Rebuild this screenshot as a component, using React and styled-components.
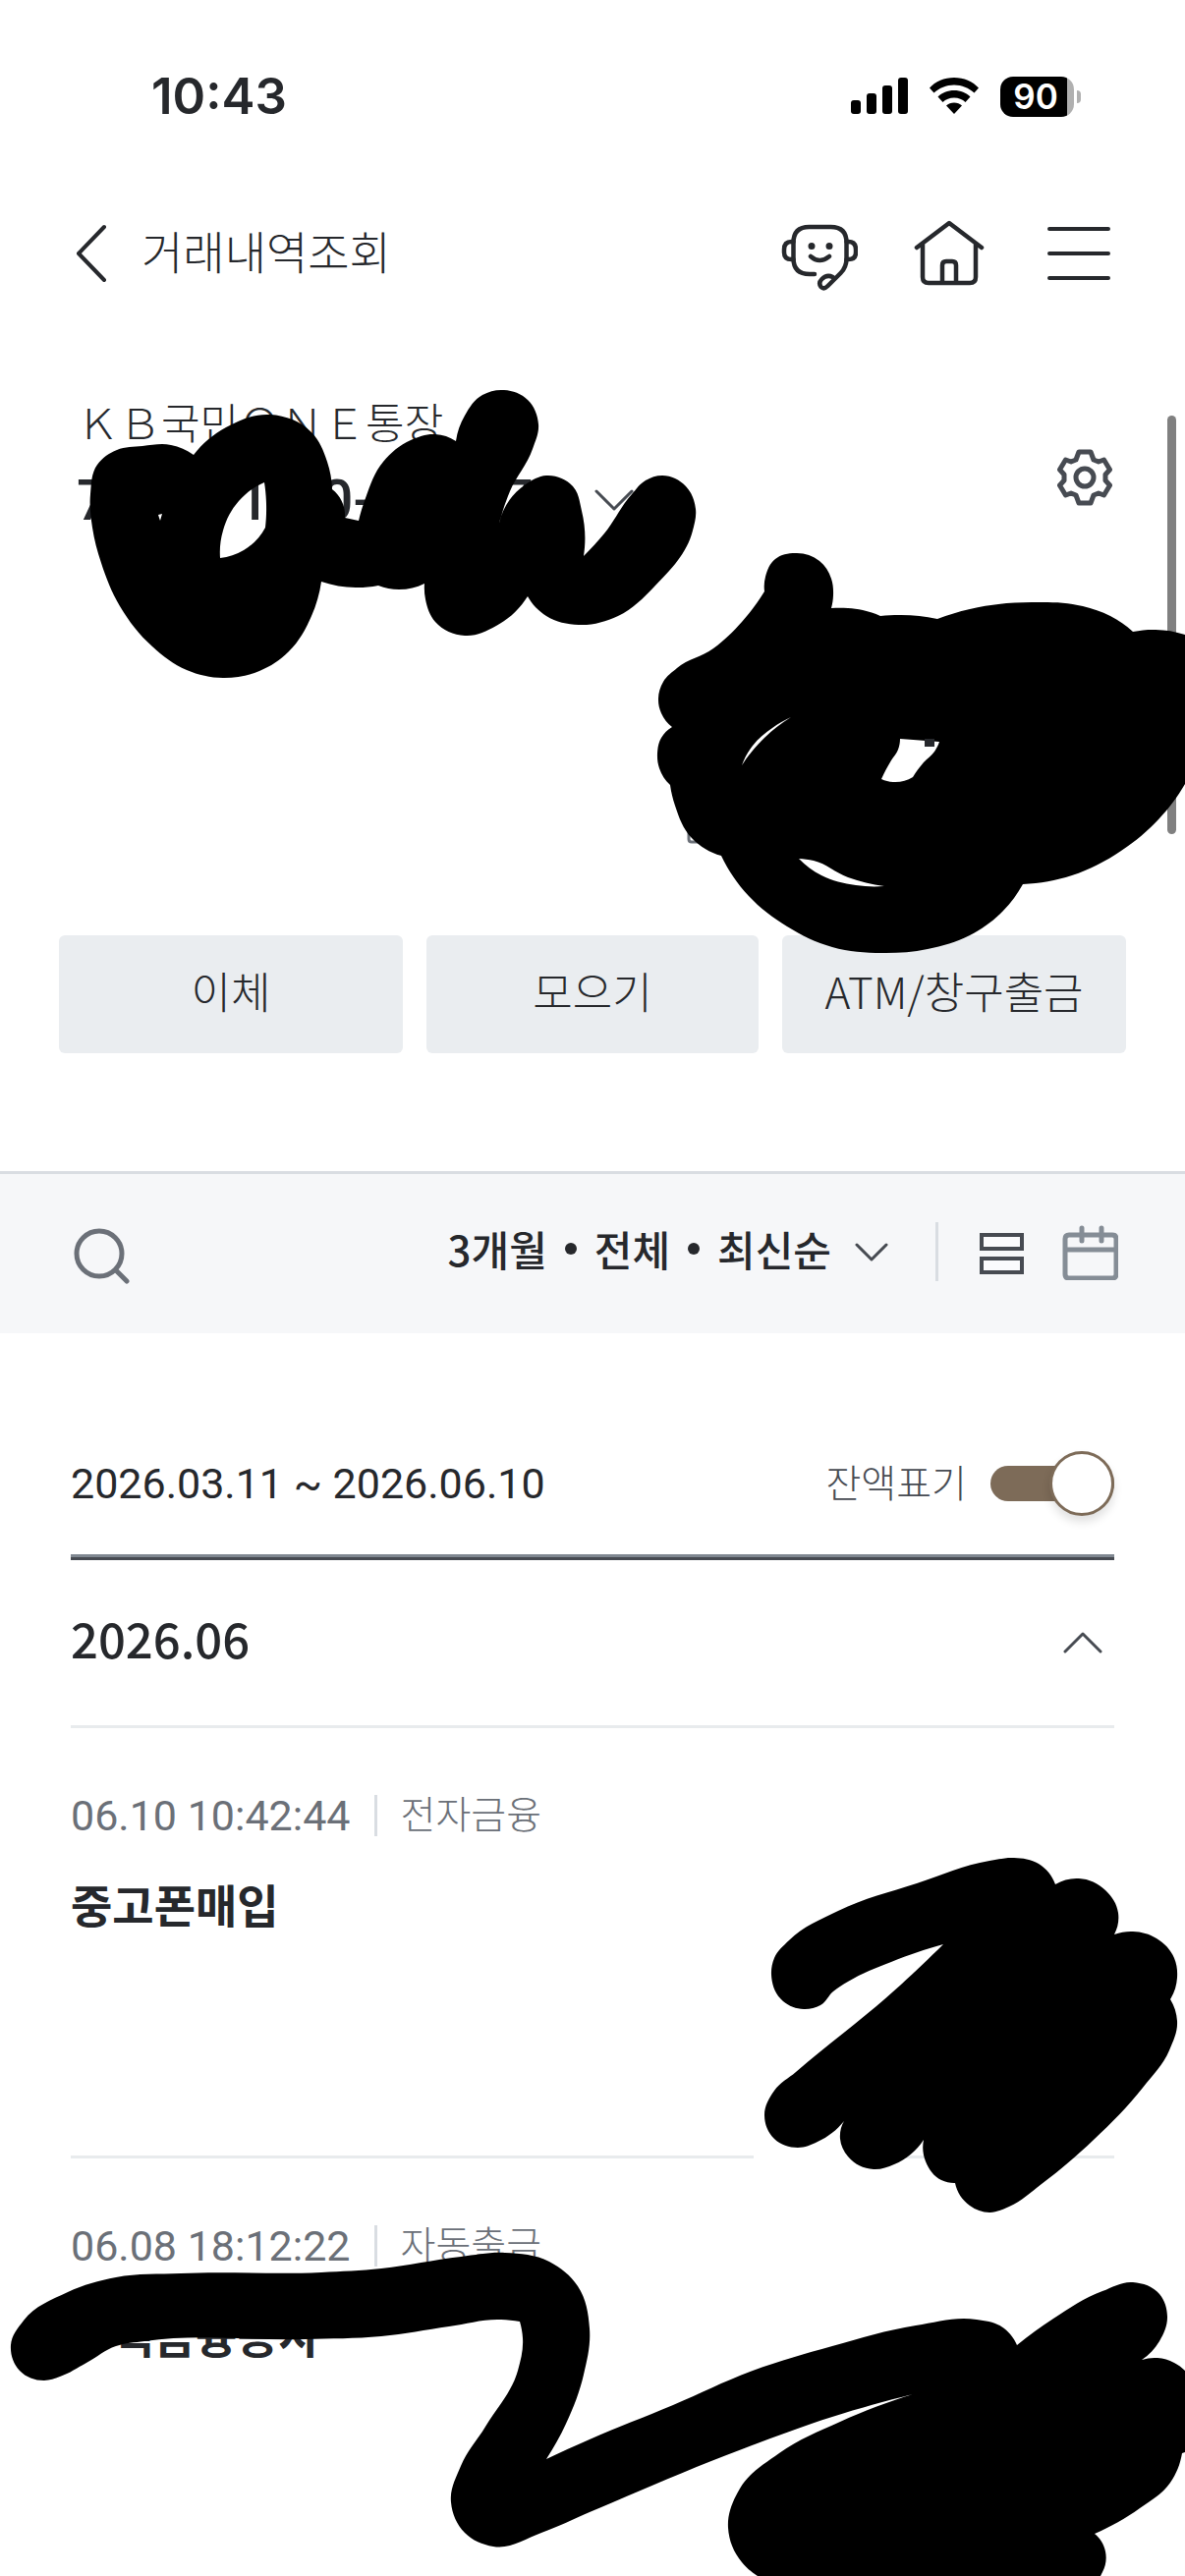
import React, { useState } from 'react';
import styled, { createGlobalStyle } from 'styled-components';

const GlobalStyle = createGlobalStyle`
  :root {
    --color_ink: #26282c;
    --color_ink_soft: #474b52;
    --color_muted: #6b7078;
    --color_line: #d9dde2;
    --color_line_soft: #e8ebed;
    --color_accent: #7d6b58;
  }

  *,
  *::before,
  *::after {
    box-sizing: border-box;
  }

  body {
    margin: 0;
    background: #fff;
    color: var(--color_ink);
    font-family: Roboto, 'Noto Sans CJK KR', sans-serif;
  }

  button {
    margin: 0;
    padding: 0;
    border: 0;
    background: none;
    color: inherit;
    font: inherit;
    cursor: pointer;
  }

  svg {
    display: block;
    flex: none;
  }
`;

const Page = styled.div`
  position: relative;
  height: 100vh;
  min-height: 100vh;
  overflow: hidden;
`;

const StatusBar = styled.div`
  display: flex;
  justify-content: space-between;
  align-items: center;
  height: 194px;
  padding: 2px 106px 0 154px;
`;

const Clock = styled.time`
  font-family: Inter, sans-serif;
  font-size: 51px;
  font-weight: 600;
  line-height: 60px;
`;

const StatusIcons = styled.div`
  display: flex;
  align-items: center;
  gap: 22px;
`;

const Battery = styled.div`
  display: flex;
  align-items: center;
  gap: 3px;

  .level {
    width: 75px;
    padding-right: 3px;
    border-radius: 13px;
    background: linear-gradient(90deg, #000 68px, #b0b0b0 68px);
    color: #fff;
    font-family: Inter, sans-serif;
    font-size: 35px;
    font-weight: 600;
    line-height: 41px;
    text-align: center;
  }

  .tip {
    width: 4px;
    height: 13px;
    border-radius: 0 6px 6px 0;
    background: #b0b0b0;
  }
`;

const Header = styled.header`
  display: flex;
  align-items: center;
  height: 128px;
  padding: 0 69px 0 75px;

  h1 {
    margin: 0 auto 0 33px;
    font-size: 46px;
    font-weight: 300;
    line-height: 64px;
  }
`;

const HeaderMenu = styled.nav`
  display: flex;
  align-items: center;
  gap: 54px;
`;

const Account = styled.section`
  display: flex;
  justify-content: space-between;
  align-items: center;
  padding: 74px 74px 0 78px;
`;

const AccountInfo = styled.div`
  padding-bottom: 35px;

  h2 {
    margin: 0 0 17px;
    font-family: 'Noto Sans CJK KR', sans-serif;
    font-size: 43px;
    font-weight: 300;
    line-height: 64px;
  }
`;

const AccountNumber = styled.button`
  display: flex;
  align-items: center;
  gap: 30px;
  font-size: 58px;
  font-weight: 500;
  line-height: 64px;
  white-space: pre;
`;

const Balance = styled.div`
  height: 376px;
`;

const Actions = styled.div`
  display: grid;
  grid-template-columns: 350fr 338fr 350fr;
  gap: 24px;
  margin-bottom: 120px;
  padding: 0 60px;
`;

const ActionButton = styled.button`
  height: 120px;
  padding-bottom: 8px;
  border-radius: 6px;
  background: #eaedf0;
  font-family: 'Noto Sans CJK KR', sans-serif;
  font-size: 44px;
  font-weight: 300;
`;

const Toolbar = styled.div`
  display: flex;
  align-items: center;
  height: 165px;
  padding: 0 68px 4px 72px;
  border-top: 3px solid var(--color_line);
  background: #f6f7f9;

  .divider {
    width: 3px;
    height: 60px;
    margin: 0 41px 0 48px;
    background: var(--color_line);
  }

  .calendar {
    margin-left: 36px;
  }
`;

const FilterButton = styled.button`
  display: flex;
  align-items: center;
  gap: 24px;
  margin-left: auto;
  font-family: 'Noto Sans CJK KR', sans-serif;
  font-size: 42px;
  font-weight: 500;
  line-height: 60px;
`;

const FilterList = styled.span`
  display: flex;
  align-items: center;
  gap: 18px;
  padding-bottom: 6px;

  i {
    width: 12px;
    height: 12px;
    border-radius: 50%;
    background: var(--color_ink);
  }
`;

const History = styled.main`
  padding: 81px 72px 0;
`;

const Period = styled.div`
  display: flex;
  justify-content: space-between;
  align-items: center;
  height: 144px;
  font-size: 43px;
`;

const SwitchLabel = styled.label`
  display: flex;
  align-items: center;
  gap: 24px;
  color: var(--color_ink_soft);
  font-size: 39px;
  font-weight: 300;

  span {
    padding-bottom: 6px;
  }
`;

const Switch = styled.input`
  position: relative;
  appearance: none;
  width: 126px;
  height: 36px;
  margin: 0;
  border-radius: 18px;
  background: ${props => (props.checked ? 'var(--color_accent)' : '#c4c8cc')};

  &::after {
    content: '';
    position: absolute;
    top: -15px;
    ${props => (props.checked ? 'right: 0;' : 'left: 0;')}
    width: 66px;
    height: 66px;
    border: 3px solid var(--color_accent);
    border-radius: 50%;
    background: #fff;
    box-shadow: 0 6px 10px rgba(0, 0, 0, 0.12);
  }
`;

const DoubleRule = styled.div`
  height: 6px;
  border-top: 3px solid #808891;
  border-bottom: 3px solid var(--color_ink_soft);
`;

const MonthButton = styled.button`
  display: flex;
  justify-content: space-between;
  align-items: center;
  width: 100%;
  height: 171px;
  padding-right: 12px;
  border-bottom: 3px solid var(--color_line_soft);
  font-family: 'Noto Sans CJK KR', sans-serif;
  font-size: 49px;
  font-weight: 500;

  span {
    padding-bottom: 12px;
  }
`;

const List = styled.ul`
  margin: 0;
  padding: 0;
  list-style: none;
`;

const Transaction = styled.li`
  height: 438px;
  padding-top: 59px;
  border-bottom: 3px solid var(--color_line_soft);

  h3 {
    margin: 27px 0 0;
    font-family: 'Noto Sans CJK KR', sans-serif;
    font-size: 46px;
    font-weight: 700;
    line-height: 64px;
  }
`;

const Meta = styled.div`
  display: flex;
  align-items: center;
  color: var(--color_muted);
  font-size: 43px;
  line-height: 60px;

  span {
    margin-left: 24px;
    padding-left: 24px;
    border-left: 3px solid var(--color_line);
    font-size: 39px;
    font-weight: 300;
    line-height: 42px;
  }
`;

const ScrollThumb = styled.div`
  position: absolute;
  top: 423px;
  right: 9px;
  width: 9px;
  height: 426px;
  border-radius: 5px;
  background: #808080;
`;

const MarkerLayer = styled.svg`
  position: absolute;
  top: 0;
  left: 0;
  width: 100%;
  pointer-events: none;
`;

// Each string is one closed marker outline. "|" marks a corner, the points between are smoothed.
const MARKS = [
  '197,463|230,435 275,422 317,440 333,470 338,498|349,513 351,527|365,530|372,507 390,470 418,448 443,442 464,449|473,423 491,402 513,397 537,407 548,432 542,457 519,500 508,533|535,493 556,484 583,495 592,520 594,566|615,543 643,503 657,489 674,484 698,495 708,518 705,540 666,597 629,627 589,636 556,627 537,607|505,637 473,647 443,633 433,610 432,594|406,600 385,596|362,598 327,592|317,627 294,663 264,683 227,690 190,682 155,658 122,617 103,573 94,537 92,503 99,473 119,458 145,454 174,453 197,463',
  '269,491 271,513 270,537|248,560 224,568|227,540 243,510 269,491',
  '161,524|165,523|163,530|161,524',
  '778,602|779,587 789,569 811,563 834,571 846,589 848,606 846,619|863,619 878,621 896,627|917,626 954,630|987,620 1050,613 1102,617 1130,627 1153,643|1176,641 1206,646|1206,798|1180,833 1141,866 1091,891 1041,900|1021,927 987,952 944,966 898,970 847,964 801,943 762,912 734,871|704,853 687,820 682,799|671,782 669,767 673,751 684,740|673,726 670,711 675,694 689,680 726,660 755,633 778,602',
  '755,779|766,759 786,741 805,730|778,751 755,779',
  '916,752|956,755|951,765 940,776 929,791|909,796 897,793|907,774 914,763 916,752',
  '813,874|828,876 863,893 900,902|871,901 836,891 813,874',
  '1074,1918|1098,1912 1125,1924 1138,1947 1134,1969|1153,1966 1177,1973 1195,1993 1198,2013 1191,2035|1198,2057 1190,2087 1163,2125 1113,2178 1060,2223 1027,2246 1007,2252 987,2245 972,2222|958,2219 942,2200 940,2178|910,2203 889,2208 863,2195 855,2177 859,2159|832,2180 812,2186 788,2177 778,2153 788,2128 810,2109 917,2020 960,1979|907,1997 863,2017 848,2027 835,2041 818,2045 797,2037 785,2010 788,1993 803,1975 853,1945 933,1917 1007,1894 1032,1891 1057,1897 1074,1918',
  '556,2503|600,2483 685,2448 766,2413 847,2388 932,2367 994,2361 1019,2368 1035,2387|1072,2360 1122,2332 1153,2323 1180,2335 1188,2358 1180,2383 1162,2402|1178,2400 1195,2405 1206,2413|1206,2496|1203,2497|1191,2527 1160,2553 1114,2579|1125,2597 1122,2618|1120,2622|771,2622|755,2608 741,2573 753,2533 793,2497 855,2465 929,2437|847,2460 755,2493 600,2557 551,2578 502,2592 473,2578 459,2547 469,2510 494,2470 527,2413 532,2380 529,2363|510,2361 457,2368 388,2378 310,2381 147,2383 118,2388 88,2405 61,2419 45,2423 20,2413 11,2387 24,2362 69,2333 118,2318 184,2314 327,2313 388,2309 469,2297 514,2293 559,2302 588,2327 600,2370 594,2417 576,2467 556,2503'
];

const angleTo = (a, b) => Math.atan2(b[1] - a[1], b[0] - a[0]);

const smoothRun = run => {
  const last = run.length - 1;
  const angles = run.map((p, i) => {
    if (i === 0 || i === last) return null;
    // weight the shorter neighbour more, so round caps stay round
    const a = run[i - 1];
    const b = run[i + 1];
    const la = Math.hypot(p[0] - a[0], p[1] - a[1]);
    const lb = Math.hypot(b[0] - p[0], b[1] - p[1]);
    const dx = ((p[0] - a[0]) / la) * lb + ((b[0] - p[0]) / lb) * la;
    const dy = ((p[1] - a[1]) / la) * lb + ((b[1] - p[1]) / lb) * la;
    return Math.atan2(dy, dx);
  });
  angles[0] = last > 1 ? 2 * angleTo(run[0], run[1]) - angles[1] : angleTo(run[0], run[1]);
  angles[last] =
    last > 1
      ? 2 * angleTo(run[last - 1], run[last]) - angles[last - 1]
      : angleTo(run[0], run[1]);

  return run
    .slice(0, -1)
    .map((p, i) => {
      const next = run[i + 1];
      const len = Math.hypot(next[0] - p[0], next[1] - p[1]) * 0.35;
      const c1 = [p[0] + Math.cos(angles[i]) * len, p[1] + Math.sin(angles[i]) * len];
      const c2 = [next[0] - Math.cos(angles[i + 1]) * len, next[1] - Math.sin(angles[i + 1]) * len];
      return `C${c1} ${c2} ${next}`;
    })
    .join('');
};

const markToPath = mark => {
  const runs = mark.split('|').map(run => run.split(' ').map(p => p.split(',').map(Number)));
  let last = runs[0][0];
  let d = `M${last}`;
  runs.forEach((run, i) => {
    const points = i ? [last, ...run] : run;
    if (points.length > 1) d += smoothRun(points);
    last = run[run.length - 1];
  });
  return d + 'Z';
};

const MarkerStrokes = () => (
  <MarkerLayer viewBox="0 0 1206 2622" aria-hidden="true">
    <rect x="767" y="2190" width="145" height="10" fill="#fff" />
    <path d="M701 838v16q0 3 3 3h14" fill="none" stroke="#6b7078" strokeWidth="3" />
    <path d={MARKS.map(markToPath).join('')} fillRule="evenodd" />
    <path d="M941 752h10v8h-10z" fill="#26282c" />
  </MarkerLayer>
);

const Icon = ({ width, height, color = '#26282c', stroke = 4, children }) => (
  <svg
    width={width}
    height={height}
    viewBox={`0 0 ${width} ${height}`}
    fill="none"
    stroke={color}
    strokeWidth={stroke}
    strokeLinecap="round"
    strokeLinejoin="round"
    aria-hidden="true"
  >
    {children}
  </svg>
);

const Signal = () => (
  <svg width="58" height="38" viewBox="0 0 58 38" aria-hidden="true">
    <rect x="0" y="23" width="10" height="14" rx="3" />
    <rect x="16" y="16" width="10" height="21" rx="3" />
    <rect x="32" y="8" width="10" height="29" rx="3" />
    <rect x="48" y="0" width="10" height="37" rx="3" />
  </svg>
);

const Wifi = () => (
  <svg width="50" height="38" viewBox="0 0 50 38" aria-hidden="true">
    <path d="M25 0C35 0 44 4 50 10.500L45.500 15.500C40 10.500 33 7.500 25 7.500S10 10.500 4.500 15.500L0 10.500C6 4 15 0 25 0Z" />
    <path d="M25 13C31.500 13 37.500 15.500 41.500 19.500L36.500 25C33.500 22 29.500 20.500 25 20.500S16.500 22 13.500 25L8.500 19.500C12.500 15.500 18.500 13 25 13Z" />
    <path d="M25 25.500C28 25.500 31 26.500 33 28.500L25 37L17 28.500C19 26.500 22 25.500 25 25.500Z" />
  </svg>
);

const transactions = [
  { time: '06.10 10:42:44', type: '전자금융', payee: '중고폰매입' },
  { time: '06.08 18:12:22', type: '자동출금', payee: '주택금융공사' }
];

const App = () => {
  const [showBalance, setShowBalance] = useState(true);

  return (
    <Page>
      <GlobalStyle />
      <StatusBar>
        <Clock>10:43</Clock>
        <StatusIcons>
          <Signal />
          <Wifi />
          <Battery>
            <span className="level">90</span>
            <span className="tip" />
          </Battery>
        </StatusIcons>
      </StatusBar>

      <Header>
        <button aria-label="뒤로">
          <Icon width={36} height={62}>
            <path d="M31 4L5 31l26 27" />
          </Icon>
        </button>
        <h1>거래내역조회</h1>
        <HeaderMenu>
          <button aria-label="상담">
            <Icon width={78} height={76} stroke={4.5}>
              <g transform="translate(0 6)">
                <path d="M34 53h-5q-16.500 0-16.500-16V21q0-16 16-16h22q16 0 16 16v16q0 9-6 15l-13 13q-4 4-7 1-3-4 1-8 5-5 11-2" />
                <path d="M12.500 20h-2q-7.500 0-7.500 8v3q0 7 7.500 7h2M66.500 20h2q7.500 0 7.500 8v3q0 7-7.500 7h-2M30 35q9 8 19 0" />
                <path d="M31 24.500v.1M49 24.500v.1" strokeWidth="7" />
              </g>
            </Icon>
          </button>
          <button aria-label="홈">
            <Icon width={78} height={72} stroke={4.5}>
              <path d="M6 30L39 5l33 25M12 26v34q0 6 6 6h42q6 0 6-6V26M32 66V48q0-4 4-4h6q4 0 4 4v18" />
            </Icon>
          </button>
          <button aria-label="전체 메뉴">
            <Icon width={78} height={72}>
              <path d="M9 11h60M9 36h60M9 61h60" />
            </Icon>
          </button>
        </HeaderMenu>
      </Header>

      <Account>
        <AccountInfo>
          {/* full-width letters, as the bank stores its product names */}
          <h2>{'\uFF2B\uFF22국민\uFF2F\uFF2E\uFF25통장'}</h2>
          <AccountNumber aria-label="계좌 선택">
            <span>{'7\u2007\u2007\u2007\u20071-\u20070-\u2007\u2007\u2007\u20077\u2007'}</span>
            <Icon width={40} height={24} color="#474b52" stroke={3}>
              <path d="M2 3l18 18 18-18" />
            </Icon>
          </AccountNumber>
        </AccountInfo>
        <button aria-label="계좌 설정">
          <Icon width={56} height={58} color="#474b52" stroke={5}>
            <path
              transform="translate(28 29)"
              d="M-6-26H6L9-18 14-16 19.500-18 25.500-8 21-3V3L25.500 8 19.500 18 14 16 9 18 6 26H-6L-9 18-14 16-19.500 18-25.500 8-21 3V-3L-25.500-8-19.500-18-14-16-9-18Z"
            />
            <circle cx="28" cy="29" r="9" />
          </Icon>
        </button>
      </Account>
      <Balance />
      <Actions>
        <ActionButton>이체</ActionButton>
        <ActionButton>모으기</ActionButton>
        <ActionButton>ATM/창구출금</ActionButton>
      </Actions>

      <Toolbar>
        <button aria-label="검색">
          <Icon width={60} height={66} color="#6b7078" stroke={5}>
            <circle cx="29" cy="35" r="23" />
            <path d="M46 52l11 11" />
          </Icon>
        </button>
        <FilterButton>
          <FilterList>
            3개월 <i /> 전체 <i /> 최신순
          </FilterList>
          <Icon width={34} height={20} color="#474b52" stroke={3}>
            <path d="M2 3l15 15L32 3" />
          </Icon>
        </FilterButton>
        <span className="divider" />
        <button aria-label="목록 보기">
          <Icon width={48} height={48} color="#474b52">
            <path d="M3 7h41v14H3zM3 31h41v14H3z" strokeLinejoin="miter" fill="#fbfbfd" />
          </Icon>
        </button>
        <button className="calendar" aria-label="달력 보기">
          <Icon width={58} height={58} color="#858d96" stroke={5}>
            <path d="M8 12h44q4 0 4 4v36q0 4-4 4H8q-4 0-4-4V16q0-4 4-4zM4 27h52M21 5v13M41 5v13" />
          </Icon>
        </button>
      </Toolbar>

      <History>
        <Period>
          <span>2026.03.11 ~ 2026.06.10</span>
          <SwitchLabel>
            <span>잔액표기</span>
            <Switch
              type="checkbox"
              checked={showBalance}
              onChange={e => setShowBalance(e.target.checked)}
            />
          </SwitchLabel>
        </Period>
        <DoubleRule />
        <MonthButton aria-expanded="true">
          <span>2026.06</span>
          <Icon width={40} height={24} color="#474b52" stroke={3}>
            <path d="M2 21L20 3l18 18" />
          </Icon>
        </MonthButton>
        <List>
          {transactions.map(item => (
            <Transaction key={item.time}>
              <Meta>
                {item.time}
                <span>{item.type}</span>
              </Meta>
              <h3>{item.payee}</h3>
            </Transaction>
          ))}
        </List>
      </History>

      <ScrollThumb />
      <MarkerStrokes />
    </Page>
  );
};

export default App;
